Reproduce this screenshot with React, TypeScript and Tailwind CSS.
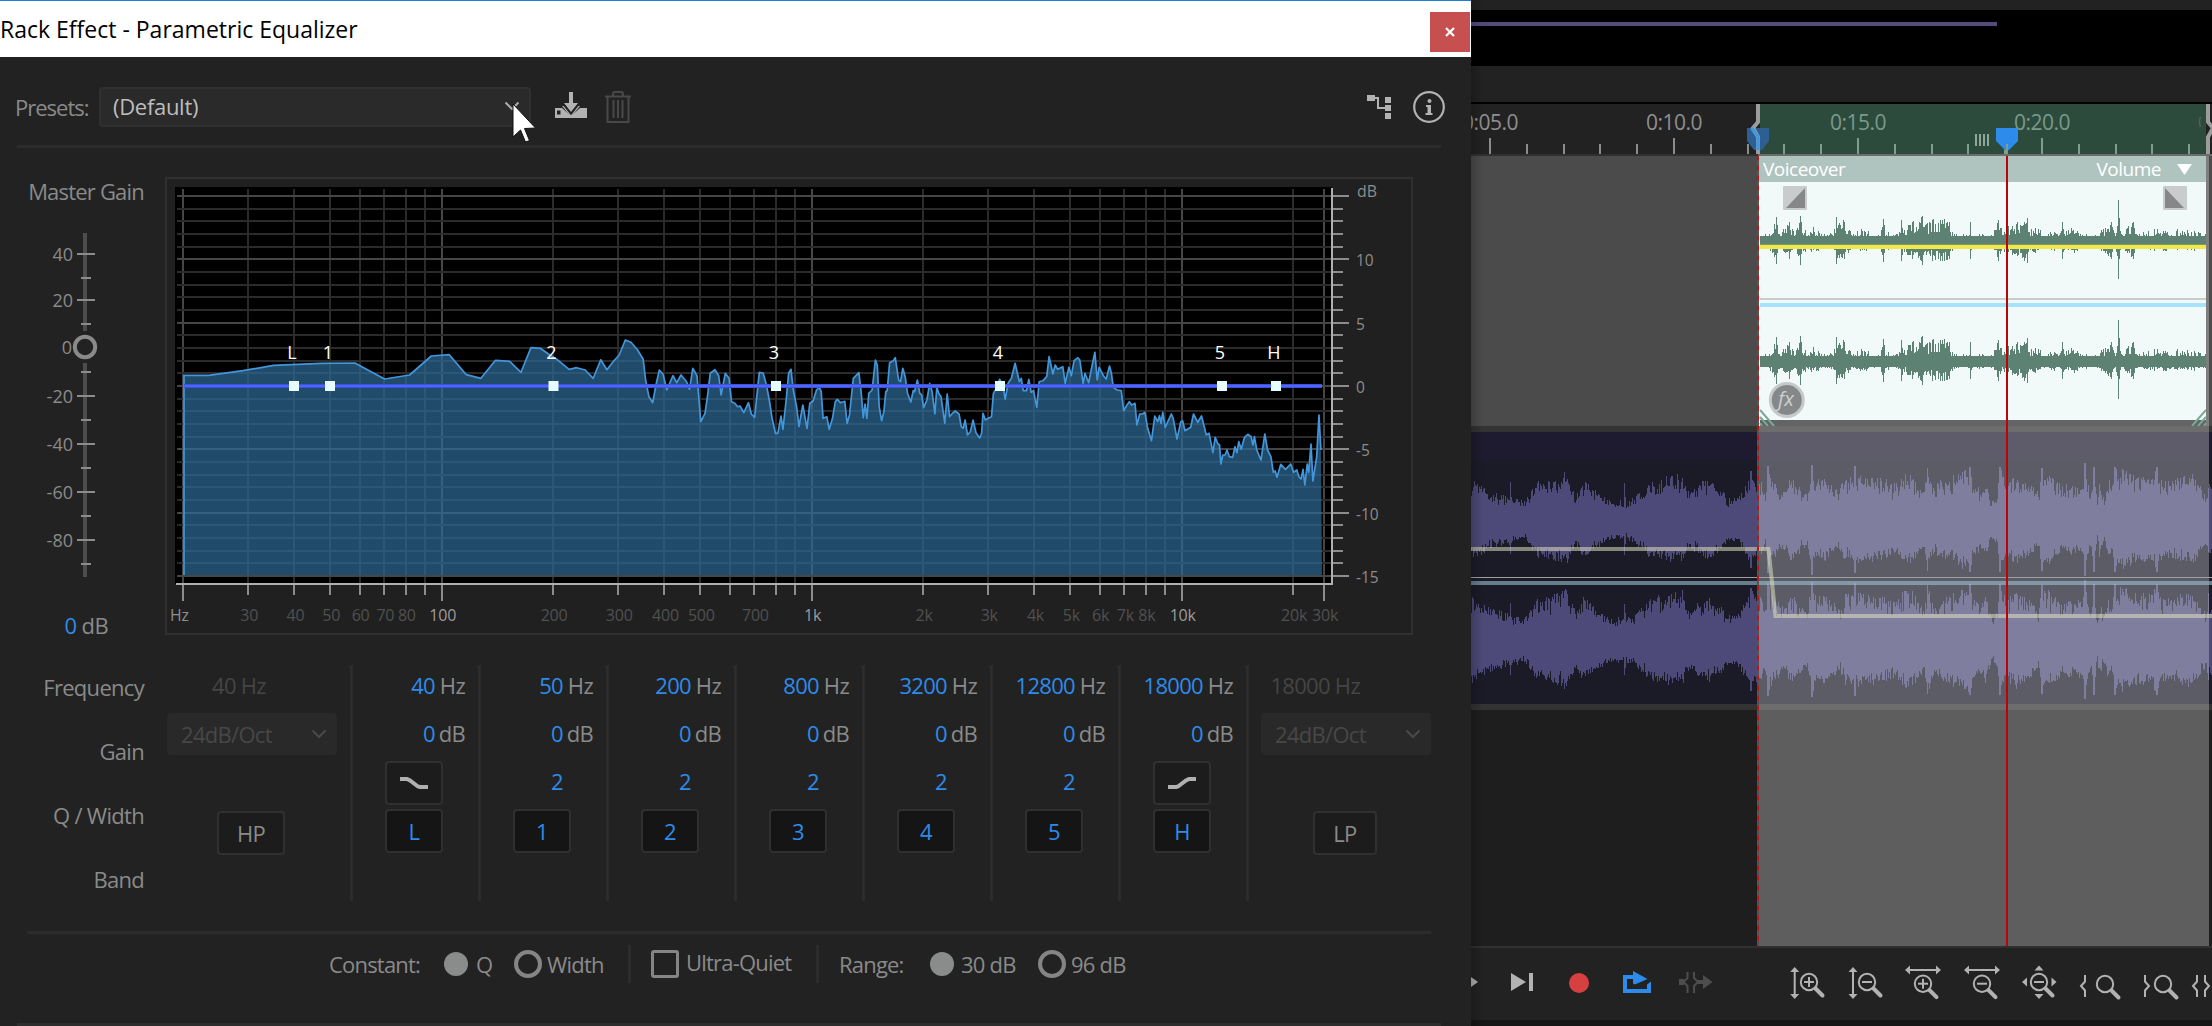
import React from "react";

type Pt = [number, number];

const FREQ_X = (f: number) => 441.7 + 370 * Math.log10(f / 100);
const DB_Y = (db: number) => 386 - db * 12.67;

const SPECTRUM_LOW =
  "390,106 442,106 515,92 580,76 680,70 752,69 815,117 868,105 914,48 952,44 988,104 1019,115 1050,61 1080,64 1104,97 1125,23 1145,25 1165,45 1180,58 1206,88 1222,83 1240,90 1257,115 1273,59 1286,89 1300,64 1312,45 1325,0 1337,7 1351,30 1363,58 1368,120 1375,170 1383,188 1390,135 1397,90 1405,102 1413,150 1426,107 1434,128 1443,105 1455,125 1461,148 1468,85 1477,107 1485,245 1494,220 1500,160 1505,100 1515,89 1523,107 1528,165 1537,100 1545,115 1550,185 1557,190 1563,200";
const SPECTRUM_HIGH =
  "0,198 8,218 18,188 24,222 31,232 41,97 49,99 56,135 62,180 68,235 75,280 80,280 87,228 91,268 98,180 103,100 108,88 113,150 120,200 125,260 133,195 142,265 148,190 155,183 162,150 168,142 172,155 176,235 184,230 189,268 196,235 202,185 206,178 213,188 222,184 227,250 232,225 240,115 252,98 257,160 261,233 265,192 269,235 273,160 280,150 287,60 291,75 295,200 300,242 305,215 309,155 312,152 317,68 325,62 329,53 336,120 340,125 345,85 350,110 355,160 362,186 367,152 370,155 376,120 381,160 385,165 389,203 396,180 402,130 407,155 413,222 417,142 421,160 426,170 434,250 439,162 444,230 450,220 456,213 464,222 469,260 473,265 477,240 482,285 488,275 494,240 500,278 508,294 512,280 515,220 520,240 526,235 533,230 537,160 545,140 550,118 557,135 562,178 568,130 575,115 583,70 592,125 596,115 600,152 607,152 612,118 617,157 622,152 629,202 634,125 642,122 650,110 655,50 663,102 668,75 673,88 684,80 689,130 697,82 702,107 708,62 716,53 720,60 727,130 731,100 739,128 747,70 752,37 757,120 761,82 770,107 776,117 783,78 787,100 791,142 799,150 808,152 813,212 820,195 825,185 830,195 837,190 841,255 847,222 853,222 858,217 864,265 872,302 879,228 885,245 889,227 892,250 896,217 901,262 914,222 918,235 926,297 934,245 938,243 943,272 955,262 961,222 970,247 978,228 988,285 994,280 1002,338 1007,292 1012,310 1016,315 1019,372 1023,345 1028,345 1032,330 1037,350 1044,352 1049,320 1053,338 1057,305 1062,328 1069,292 1076,283 1083,290 1087,315 1090,290 1095,330 1104,360 1112,282 1118,330 1125,350 1130,397 1134,393 1138,412 1146,373 1156,388 1167,372 1173,397 1180,390 1184,410 1189,417 1193,388 1197,435 1202,372 1205,398 1210,312 1214,423 1222,350 1227,225 1231,330";

const toPoints = (s: string, offset: number) =>
  s
    .split(" ")
    .map((p) => p.split(",").map(Number))
    .map(([x, y]) => `${(offset + x / 2.119).toFixed(1)},${(340 + y / 3).toFixed(1)}`)
    .join(" ");

const SPECTRUM = `${toPoints(SPECTRUM_LOW, 0)} ${toPoints(SPECTRUM_HIGH, 740)}`;

const FREQS: [number, string, boolean][] = [
  [20, "", true], [30, "30", false], [40, "40", false], [50, "50", false], [60, "60", false],
  [70, "70", false], [80, "80", false], [90, "", false], [100, "100", true], [200, "200", false],
  [300, "300", false], [400, "400", false], [500, "500", false], [600, "", false], [700, "700", false],
  [800, "", false], [900, "", false], [1000, "1k", true], [2000, "2k", false], [3000, "3k", false],
  [4000, "4k", false], [5000, "5k", false], [6000, "6k", false], [7000, "7k", false], [8000, "8k", false],
  [9000, "", false], [10000, "10k", true], [20000, "20k", false], [24270, "30k", true],
];

const HANDLES: [string, number][] = [
  ["L", 294], ["1", 330], ["2", 553.5], ["3", 776], ["4", 1000], ["5", 1222], ["H", 1276],
];

const SANS = "font-['Open_Sans','Noto_Sans',sans-serif]";

function EqGraph() {
  const dbs = Array.from({ length: 31 }, (_, i) => 15 - i);
  return (
    <svg width="1248" height="458" viewBox="165 177 1248 458" className={SANS}>
      <rect x="166" y="178" width="1246" height="456" fill="#202020" stroke="#303030" strokeWidth="2" />
      <rect x="175" y="187" width="1157" height="397" fill="#000" />
      <g shapeRendering="crispEdges">
        {FREQS.map(([f, , major]) => (
          <rect key={f} x={Math.round(FREQ_X(f)) - 1} y="189" width="2" height="395" fill={major ? "#464646" : "#2b2b2b"} />
        ))}
        {dbs.map((d) => (
          <rect key={d} x="177" y={Math.round(DB_Y(d)) - 1} width="1155" height="2" fill={d % 5 === 0 ? "#464646" : "#2b2b2b"} />
        ))}
      </g>
      <polygon points={`${SPECTRUM} 1322,575 184,575`} fill="rgb(46,107,153)" fillOpacity="0.7" />
      <polyline points={`184,575 ${SPECTRUM}`} fill="none" stroke="#4296d9" strokeWidth="1.7" strokeLinejoin="round" />
      <rect x="184" y="384" width="1138" height="4" fill="#3f4fe0" />
      <rect x="184" y="385" width="1138" height="2" fill="#4a68f4" />
      {HANDLES.map(([name, x]) => (
        <g key={name}>
          <rect x={x - 5} y="381" width="10" height="10" fill="#e6fdfd" />
          <text x={x - 2} y="359" textAnchor="middle" fontSize="18" fontWeight="500" fill="#fff">{name}</text>
        </g>
      ))}
      <g shapeRendering="crispEdges">
        <rect x="1331" y="188" width="2" height="397" fill="#b0b0b0" />
        <rect x="176" y="583" width="1157" height="2" fill="#b0b0b0" />
        {FREQS.map(([f, , major]) => (
          <rect key={f} x={Math.round(FREQ_X(f)) - 1} y="585" width="2" height={major ? 16 : 10} fill="#8c8c8c" />
        ))}
        {dbs.map((d) => (
          <rect key={d} x="1333" y={Math.round(DB_Y(d)) - 1} width={d % 5 === 0 ? 16 : 10} height="2" fill="#8c8c8c" />
        ))}
      </g>
      <g fontSize="16" textAnchor="middle">
        <text x="179.5" y="620.5" fill="#8f8f8f" textLength="19" lengthAdjust="spacingAndGlyphs">Hz</text>
        {FREQS.map(([f, label, major]) =>
          label ? (
            <text key={f} x={FREQ_X(f) + 1} y="620.5" letterSpacing="-0.2" fill={major && f < 20000 ? "#9c9c9c" : "#505050"}>{label}</text>
          ) : null
        )}
      </g>
      <g fontSize="15.5" fill="#8c8c8c">
        <text x="1357" y="196.500" textLength="20" lengthAdjust="spacingAndGlyphs">dB</text>
        {[10, 5, 0, -5, -10, -15].map((d) => (
          <text key={d} x={1356} y={DB_Y(d) + 7}>{d}</text>
        ))}
      </g>
    </svg>
  );
}

function MasterSlider() {
  const labels: [string, number][] = [["40", 254], ["20", 300], ["-20", 396], ["-40", 444], ["-60", 492], ["-80", 540]];
  return (
    <svg width="165" height="365" viewBox="0 225 165 365" className={SANS}>
      <rect x="83" y="233" width="4" height="98" fill="#4d4d4d" />
      <rect x="83" y="363" width="4" height="214" fill="#4d4d4d" />
      {labels.map(([t, y]) => (
        <g key={t}>
          <rect x="77" y={y - 1} width="18" height="2" fill="#8c8c8c" />
          <text x="73" y={y + 7} fontSize="18" textAnchor="end" fill="#8a8a8a">{t}</text>
        </g>
      ))}
      {[278, 324, 372, 420, 468, 516, 564].map((y) => (
        <rect key={y} x="81" y={y - 1} width="10" height="2" fill="#8c8c8c" />
      ))}
      <text x="72" y="354" fontSize="18" textAnchor="end" fill="#8a8a8a">0</text>
      <circle cx="85" cy="347" r="10.200" fill="#222" stroke="#8a8a8a" strokeWidth="4" />
    </svg>
  );
}

function Chevron({ className }: { className: string }) {
  return (
    <svg width="16" height="10" viewBox="0 0 16 10" className={className}>
      <path d="M1.500 1.500 8 8l6.500-6.500" fill="none" stroke="currentColor" strokeWidth="2" />
    </svg>
  );
}

function Band({ freq, band, shelf }: { freq: string; band: string; shelf?: "low" | "high" }) {
  return (
    <div className="flex h-[236px] w-[128px] flex-col border-l-[3px] border-[#2c2c2c] text-[22px] tracking-[-0.7px]">
      <div className="mt-1 flex h-8 items-center justify-end pr-[13px]">
        <span className="text-[#2d8ceb]">{freq}</span>
        <span className="w-[30px] text-right text-[#8a8a8a]">Hz</span>
      </div>
      <div className="mt-4 flex h-8 items-center justify-end pr-[13px]">
        <span className="text-[#2d8ceb]">0</span>
        <span className="w-[30px] text-right text-[#8a8a8a]">dB</span>
      </div>
      {shelf ? (
        <div className="mt-3 ml-[32px] flex h-11 w-[58px] items-center justify-center rounded border-2 border-[#303030] bg-[#1c1c1c]">
          <svg width="28" height="14" viewBox="0 0 28 14" className={shelf === "high" ? "-scale-x-100" : ""}>
            <path d="M0 3h7l3 1.500 8 6 2 .5h8" fill="none" stroke="#b0b0b0" strokeWidth="4" />
          </svg>
        </div>
      ) : (
        <div className="mt-4 mb-[-4px] flex h-11 items-start justify-end pr-[43px] text-[#2d8ceb]">2</div>
      )}
      <div className="mt-1 ml-[32px] flex h-11 w-[58px] items-center justify-center rounded border-2 border-[#303030] bg-[#151515] text-[#2d8ceb]">
        {band}
      </div>
    </div>
  );
}

function PassFilter({ freq, button, edge }: { freq: string; button: string; edge: "hp" | "lp" }) {
  return (
    <div className={edge === "hp" ? "h-[236px] w-[185px] pl-[2px] tracking-[-0.7px]" : "h-[236px] w-[187px] border-l-[3px] border-[#2c2c2c] pl-[12px] tracking-[-0.7px]"}>
      <div className="mt-1 flex h-8 w-[99px] items-center justify-end text-[22px] text-[#454545]">{freq}</div>
      <div className="mt-3 flex h-[42px] w-[170px] items-center justify-between rounded bg-[#292929] pr-[10px] pl-[14px] text-[22px] text-[#474747]">
        24dB/Oct
        <Chevron className="text-[#4a4a4a]" />
      </div>
      <div className={edge === "hp" ? "mt-14 ml-[50px] flex h-11 w-[68px] items-center justify-center rounded border-2 border-[#303030] bg-[#1c1c1c] text-[22px] text-[#8a8a8a]" : "mt-14 ml-[52px] flex h-11 w-[64px] items-center justify-center rounded border-2 border-[#303030] bg-[#1c1c1c] text-[22px] text-[#8a8a8a]"}>
        {button}
      </div>
    </div>
  );
}

const FilledRadio = () => <span className="block size-6 rounded-full bg-[#8a8c8b]" />;
const OpenRadio = () => <span className="block size-7 rounded-full border-4 border-[#858585]" />;

function EqDialog() {
  return (
    <section className="relative h-[1026px] w-[1471px] shrink-0 overflow-hidden bg-[#222]">
      <header className="flex h-[57px] items-start justify-between border-t border-[#1b80d4] bg-white">
        <h1 className="mt-[10px] text-[23px] leading-9 whitespace-nowrap text-black">Rack Effect - Parametric Equalizer</h1>
        <button className="mt-[11px] mr-px flex h-10 w-10 items-center justify-center bg-[#c64f4f]">
          <svg width="12" height="12" viewBox="0 0 12 12"><path d="M2 2l8 8M10 2l-8 8" stroke="#fff" strokeWidth="2.200" /></svg>
        </button>
      </header>
      <div className="flex h-[88px] items-start pt-[30px] pl-[15px]">
        <span className="h-10 w-[84px] text-[22px] leading-10 tracking-[-1px] text-[#8a8a8a]">Presets:</span>
        <div className="relative flex h-10 w-[432px] items-center justify-between rounded border-2 border-[#303030] bg-[#2a2a2a] pr-[9px] pb-[2px] pl-3 text-[22px] tracking-[-0.300px] text-[#bdbdbd]">
          (Default)
          <Chevron className="text-[#aaa]" />
          <svg width="28" height="42" viewBox="0 0 28 42" className="absolute top-[14px] left-[410px]">
            <path d="M2 1v33l7.500-7 5 12 4-1.500-5-12 11-.5z" fill="#fff" stroke="#111" strokeWidth="1" />
          </svg>
        </div>
        <svg width="34" height="40" viewBox="554 87 34 40" className="ml-[23px]">
          <path d="M569 92h4v11h5l-7 9-7-9h5z" fill="#b2b2b2" />
          <path d="M555 108h7l9 8 9-8h7v10h-32z" fill="#b2b2b2" />
          <path d="M562 106h3l6 8 6-8h3l-9 11z" fill="#b2b2b2" />
          <path d="M563 104l8 10 8-10" fill="none" stroke="#222" strokeWidth="1.500" />
          <rect x="557" y="110.500" width="3.500" height="4" fill="#222" />
        </svg>
        <svg width="28" height="40" viewBox="604 87 28 40" className="ml-4">
          <path d="M605 96.500h26M613 96v-2q0-2 2-2h6q2 0 2 2v2M607.500 97v25h21V97M613.500 100v18M618 100v18M622.500 100v18" fill="none" stroke="#484848" strokeWidth="2" />
        </svg>
        <svg width="84" height="40" viewBox="1364 87 84 40" className="ml-[732px]">
          <rect x="1367" y="95" width="8" height="6" fill="#b2b2b2" />
          <path d="M1374 98h4v10h8" fill="none" stroke="#b2b2b2" strokeWidth="2" />
          <rect x="1385" y="97" width="6" height="6" fill="#b2b2b2" />
          <rect x="1385" y="105" width="6" height="6" fill="#b2b2b2" />
          <rect x="1385" y="113" width="6" height="6" fill="#b2b2b2" />
          <circle cx="1429" cy="107" r="14.800" fill="none" stroke="#b2b2b2" strokeWidth="2.200" />
          <circle cx="1429.500" cy="101" r="2" fill="#b2b2b2" />
          <path d="M1426 105h5v8h1.500v2h-7v-2h2v-6h-1.500z" fill="#b2b2b2" />
        </svg>
      </div>
      <div className="ml-[17px] h-[3px] w-[1424px] bg-[#2c2c2c]" />
      <div className="mt-[29px] flex h-[458px]">
        <div className="w-[165px]">
          <div className="h-[48px] pr-[21px] text-right text-[22px] leading-7 tracking-[-0.8px] text-[#8a8a8a]">Master Gain</div>
          <MasterSlider />
          <div className="mt-[19px] pr-[57px] text-right text-[22px] leading-8 tracking-[-0.6px] text-[#8a8a8a]"><span className="text-[#2d8ceb]">0</span> dB</div>
        </div>
        <EqGraph />
      </div>
      <div className="mt-[30px] flex">
        <div className="flex w-[165px] flex-col gap-8 pt-[6px] pr-[21px] text-right text-[22px] leading-8 tracking-[-0.700px] text-[#8a8a8a]">
          <div>Frequency</div>
          <div>Gain</div>
          <div>Q / Width</div>
          <div>Band</div>
        </div>
        <PassFilter freq="40 Hz" button="HP" edge="hp" />
        <Band freq="40" band="L" shelf="low" />
        <Band freq="50" band="1" />
        <Band freq="200" band="2" />
        <Band freq="800" band="3" />
        <Band freq="3200" band="4" />
        <Band freq="12800" band="5" />
        <Band freq="18000" band="H" shelf="high" />
        <PassFilter freq="18000 Hz" button="LP" edge="lp" />
      </div>
      <div className="mt-[30px] ml-[27px] h-[3px] w-[1404px] bg-[#2c2c2c]" />
      <div className="flex h-[60px] items-center pl-[329px] text-[22px] tracking-[-0.8px] whitespace-nowrap text-[#8a8a8a]">
        <span className="w-[115px]">Constant:</span>
        <FilledRadio />
        <span className="ml-2 w-[38px]">Q</span>
        <OpenRadio />
        <span className="ml-[5px] w-[81px]">Width</span>
        <span className="h-[38px] w-[3px] bg-[#2c2c2c]" />
        <span className="ml-5 block size-7 rounded-[3px] border-[3px] border-[#858585]" />
        <span className="ml-[7px] w-[130px] pb-1">Ultra-Quiet</span>
        <span className="h-[38px] w-[3px] bg-[#2c2c2c]" />
        <span className="ml-5 w-[91px]">Range:</span>
        <FilledRadio />
        <span className="ml-[7px] w-[77px]">30 dB</span>
        <OpenRadio />
        <span className="ml-[5px]">96 dB</span>
      </div>
      <div className="mt-[29px] ml-[17px] h-[3px] w-[1424px] bg-[#2e2e2e]" />
    </section>
  );
}

const VOICE_ENV: Pt[] = [
  [8, 6], [15, 8], [20, 16], [24, 25], [28, 12], [37, 20], [43, 10], [48, 26], [52, 11], [60, 15], [70, 10], [80, 8],
  [84, 25], [92, 20], [100, 9], [112, 15], [120, 8], [128, 9], [131, 23], [133, 9], [148, 10], [149, 22], [151, 12], [160, 20], [170, 26],
  [173, 16], [180, 22], [190, 22], [197, 20], [200, 11], [205, 8], [217, 8], [218, 20], [220, 9], [240, 7], [246, 22], [250, 14], [262, 18],
  [275, 24], [278, 13], [285, 14], [294, 9], [298, 13], [308, 9], [310, 20], [313, 10], [323, 18], [328, 8], [343, 7], [359, 20], [363, 7],
  [366, 42], [369, 8], [381, 20], [385, 9], [400, 12], [420, 12], [440, 11], [455, 7],
];

const BED_ENV: Pt[] = (
  [
    [0, 430], [40, 460], [78, 480], [80, 430], [83, 480], [110, 490], [140, 432], [165, 430], [200, 405], [220, 475], [235, 430],
    [260, 460], [290, 490], [320, 490], [322, 430], [325, 490], [345, 480], [370, 440], [400, 422], [445, 412], [460, 470], [490, 430],
    [515, 440], [540, 478], [560, 485], [580, 440], [590, 400], [600, 430],
  ] as Pt[]
)
  .map(([x, y]): Pt => [1 + x / 2.119, 181 - y / 3])
  .concat(
    (
      [
        [20, 180], [40, 230], [46, 145], [60, 190], [100, 225], [115, 180], [150, 215], [165, 235], [178, 140], [190, 190], [220, 178],
        [260, 225], [275, 180], [300, 178], [307, 145], [312, 180], [340, 175], [400, 188], [420, 205], [455, 170], [480, 175], [515, 225],
        [525, 150], [540, 195], [580, 185], [620, 168], [652, 148], [660, 190], [680, 215], [700, 190], [718, 250], [735, 232], [742, 148],
        [760, 190], [790, 168], [830, 200], [860, 228], [868, 150], [900, 185], [930, 205], [970, 200], [992, 200], [998, 135], [1003, 180],
        [1015, 230], [1025, 148], [1035, 255], [1040, 195], [1055, 248], [1070, 185], [1078, 225], [1087, 148], [1130, 170], [1200, 175],
        [1213, 148], [1220, 185], [1250, 195], [1320, 170], [1360, 230], [1368, 180], [1380, 200],
      ] as Pt[]
    ).map(([x, y]): Pt => [281 + x / 3, 101 - y / 3])
  );

function envelopeAt(env: Pt[], x: number) {
  for (let i = 1; i < env.length; i++) {
    if (x <= env[i][0]) {
      const [x0, y0] = env[i - 1];
      const [x1, y1] = env[i];
      return y0 + ((y1 - y0) * (x - x0)) / Math.max(x1 - x0, 0.01);
    }
  }
  return env[env.length - 1][1];
}

type WaveShape = { mid: number; seed: number; low: number; skew: number; floor: number; gain: number; boost: number; pin: number };

/* One-pixel columns whose height follows the envelope; columns at peaks of at least `pin` keep their full height. */
function wavePath(env: Pt[], from: number, to: number, w: WaveShape) {
  let s = w.seed;
  const rnd = () => {
    s = (s * 16807) % 2147483647;
    return s / 2147483647;
  };
  const jitter = () => w.low + (1.05 - w.low) * Math.pow(rnd(), w.skew);
  let d = "";
  for (let x = from; x < to; x++) {
    const peak = env.find(([kx, ky]) => Math.abs(kx - x) < 1 && ky >= w.pin);
    const e = (peak ? peak[1] : envelopeAt(env, x)) + w.boost;
    const up = jitter();
    const down = jitter() * 0.6 + up * 0.4;
    const a = Math.max(w.floor, e * (peak ? 1 : up));
    const b = Math.max(w.floor, e * w.gain * (peak ? 1 : down));
    d += `M${x} ${(w.mid - a).toFixed(1)}h1V${(w.mid + b).toFixed(1)}h-1z`;
  }
  return d;
}

const VOICE: WaveShape = { mid: 85.7, seed: 4211, low: 0.4, skew: 1.4, floor: 5.7, gain: 0.88, boost: 0, pin: 20 };
const BED: WaveShape = { mid: 89, seed: 977, low: 0.6, skew: 0.7, floor: 4, gain: 0.95, boost: 2, pin: 47 };
const VOICE_TOP = wavePath(VOICE_ENV, 8, 454, VOICE);
const VOICE_BOTTOM = wavePath(VOICE_ENV, 8, 454, { ...VOICE, mid: 205.7 });
const BED_TOP = wavePath(BED_ENV, 0, 741, BED);
const BED_BOTTOM = wavePath(BED_ENV, 0, 741, { ...BED, mid: 209, seed: 5381, boost: 5 });

function Ruler() {
  const ticks = Array.from({ length: 21 }, (_, i) => ({ x: Math.round(1489.900 + i * 36.800), major: i % 5 === 0 }));
  const inside = (x: number) => x > 1760 && x < 2206;
  return (
    <svg width="741" height="52" viewBox="1471 104 741 52" className={`block ${SANS}`}>
      <rect x="1471" y="104" width="741" height="52" fill="#222" />
      <rect x="1760" y="104" width="446" height="50" fill="#2c4b3d" />
      <rect x="1471" y="154" width="287" height="2" fill="#303030" />
      <rect x="1758" y="154" width="454" height="2" fill="#6c6c6c" />
      {ticks.map(({ x, major }) => (
        <rect key={x} x={x - 1} y={major ? 138 : 144} width="2" height={major ? 16 : 10} fill={inside(x) ? "#7d9f90" : "#8c8c8c"} />
      ))}
      <g fontSize="21" letterSpacing="-0.500">
        <text x="1462" y="130" fill="#8f8f8f">0:05.0</text>
        <text x="1646" y="130" fill="#8f8f8f">0:10.0</text>
        <text x="1830" y="130" fill="#7a9a8b">0:15.0</text>
        <text x="2014" y="130" fill="#7a9a8b">0:20.0</text>
      </g>
      <path d="M2200.500 117q-2 5 0 10" fill="none" stroke="#54605a" strokeWidth="1.500" />
      <path d="M1747 128h22v13l-7 9h-8l-7-9z" fill="#2e5f92" />
      <path d="M1758 104v18l-5 6 5 9v17" fill="none" stroke="#9a9d9b" strokeWidth="4" />
      <path d="M1751.500 128l6.500 9v13" fill="none" stroke="#4596dc" strokeWidth="3.500" />
      <path d="M2208 104v18l5 6-5 9v17" fill="none" stroke="#9a9d9b" strokeWidth="4" />
      <g fill="#8fa69b">
        <rect x="1975" y="134" width="2" height="12" />
        <rect x="1979" y="134" width="2" height="12" />
        <rect x="1983" y="134" width="2" height="12" />
        <rect x="1987" y="134" width="2" height="12" />
      </g>
      <path d="M1996 128h22v13l-9 9h-4l-9-9z" fill="#2d8ceb" />
      <rect x="2006" y="144" width="2" height="10" fill="#7d9f90" />
    </svg>
  );
}

function VoiceClip() {
  return (
    <div className="absolute top-0 left-[287px] z-10 h-[270px] w-[448px] bg-[#f2faf9]">
      <div className="flex h-[26px] items-center bg-[#b0c4bf] pr-[14px] pl-[5px] text-[19px] leading-[26px] tracking-[-0.5px] text-white">
        <span className="grow">Voiceover</span>
        <span className="mr-[16px]">Volume</span>
        <svg width="15" height="11" viewBox="0 0 15 11"><path d="M0 0h15L7.500 11z" fill="#fff" /></svg>
      </div>
      <svg width="448" height="244" viewBox="6 26 448 244" className="block">
        <path d={VOICE_TOP} fill="#5d8274" shapeRendering="crispEdges" />
        <path d={VOICE_BOTTOM} fill="#5d8274" shapeRendering="crispEdges" />
        <rect x="8" y="88" width="446" height="1" fill="#87975a" />
        <rect x="8" y="89" width="446" height="4" fill="#eeea4e" />
        <rect x="8" y="142.500" width="446" height="1" fill="#9a9fa0" />
        <rect x="8" y="147" width="446" height="4" fill="#a6e2fc" />
        <rect x="31" y="30" width="24" height="24" rx="1" fill="#c9cccc" />
        <path d="M34 52h19V32z" fill="#858788" />
        <rect x="411" y="30" width="24" height="24" rx="1" fill="#c9cccc" />
        <path d="M413 32v20h19z" fill="#858788" />
        <circle cx="34.800" cy="244" r="16.500" fill="#858888" stroke="#c5c9c8" strokeWidth="3" />
        <text x="34" y="250" textAnchor="middle" fontSize="20" fontStyle="italic" fill="#cdd0cf" className={SANS}>fx</text>
        <rect x="8" y="264" width="446" height="6" fill="#636466" />
        <path d="M8 254l14 16M8 261l8 9M8 267l2 3M454 254l-14 16M454 261l-8 9M454 267l-2 3" fill="none" stroke="#79a995" strokeWidth="2" />
      </svg>
    </div>
  );
}

function BedTrack() {
  return (
    <svg width="741" height="272" viewBox="0 0 741 272" className="block">
      <rect width="741" height="272" fill="#1a1b27" />
      <rect width="741" height="28" fill="#1e1b30" />
      <path d={BED_TOP} fill="#4d4a79" shapeRendering="crispEdges" />
      <path d={BED_BOTTOM} fill="#4d4a79" shapeRendering="crispEdges" />
    </svg>
  );
}

function Magnifier({ x, y, sign }: { x: number; y: number; sign?: "plus" | "minus" }) {
  return (
    <g fill="none" stroke="#b2b2b2">
      <circle cx={x} cy={y} r="8.200" strokeWidth="2" />
      <path d={`M${x + 6.500} ${y + 6.500}l7 7`} strokeWidth="4" strokeLinecap="round" />
      {sign && <path d={`M${x - 5} ${y}h10`} strokeWidth="2" />}
      {sign === "plus" && <path d={`M${x} ${y - 5}v10`} strokeWidth="2" />}
    </g>
  );
}

function Slot({ x, w, children }: { x: number; w: number; children?: React.ReactNode }) {
  return (
    <svg width={w} height="72" viewBox={`${x} 948 ${w} 72`} className="shrink-0">
      {children}
    </svg>
  );
}

const vArrow = (x: number) => `M${x - 4.500} 972l4.500-5 4.500 5h-3.500v22h3.500l-4.500 5-4.500-5h3.500v-22z`;
const hArrow = (x: number) => `M${x} 970l5-4.500v3.500h26v-3.500l5 4.500-5 4.500v-3.500h-26v3.500z`;

function Transport() {
  return (
    <div className="flex h-[72px] w-[741px] overflow-hidden bg-[#222]">
      <Slot x={1471} w={26}><path d="M1471 977l7 5-7 5z" fill="#b2b2b2" /></Slot>
      <Slot x={1497} w={53}><path d="M1511 973l15 9-15 9zM1529 973h4v18h-4z" fill="#b2b2b2" /></Slot>
      <Slot x={1550} w={55}><circle cx="1579" cy="983" r="10" fill="#d64040" /></Slot>
      <Slot x={1605} w={60}>
        <path d="M1623 975h10v-4l14.500 8-12.500 5.500-2-1v-4.500h-6v10h20v-4.500l4-3v11.500h-28z" fill="#2d8ceb" />
      </Slot>
      <Slot x={1665} w={105}>
        <path d="M1687.500 972v6l-4 4 4 4v7M1694 972v6l4 4-4 4v7" fill="none" stroke="#4d4d4d" strokeWidth="2" />
        <path d="M1679 979h5v6h-5zM1697 980h6v-5l9.500 7-9.500 7v-5h-6z" fill="#4d4d4d" />
      </Slot>
      <Slot x={1770} w={66}><path d={vArrow(1794.700)} fill="#b2b2b2" /><Magnifier x={1809} y={982} sign="plus" /></Slot>
      <Slot x={1836} w={60}><path d={vArrow(1853)} fill="#b2b2b2" /><Magnifier x={1867} y={982} sign="minus" /></Slot>
      <Slot x={1896} w={58}><path d={hArrow(1905)} fill="#b2b2b2" /><Magnifier x={1923} y={983.700} sign="plus" /></Slot>
      <Slot x={1954} w={58}><path d={hArrow(1964)} fill="#b2b2b2" /><Magnifier x={1982} y={983.700} sign="minus" /></Slot>
      <Slot x={2012} w={58}>
        <Magnifier x={2039} y={982} sign="minus" />
        <path d="M2034.500 970.500l4.500-5 4.500 5zM2034.500 994l4.500 5 4.500-5zM2027 977.500l-5 4.500 5 4.500zM2051.500 977.500l5 4.500-5 4.500z" fill="#b2b2b2" />
      </Slot>
      <Slot x={2070} w={60}>
        <path d="M2085 975v6.500l-4 4.500 4 4.500v6.500" fill="none" stroke="#b2b2b2" strokeWidth="2" />
        <Magnifier x={2105} y={984} />
      </Slot>
      <Slot x={2130} w={56}>
        <path d="M2145 975v6.500l4 4.500-4 4.500v6.500" fill="none" stroke="#b2b2b2" strokeWidth="2" />
        <Magnifier x={2163} y={984} />
      </Slot>
      <Slot x={2186} w={26}>
        <path d="M2197 975v6.500l-4 4.500 4 4.500v6.500M2205 975v6.500l4 4.500-4 4.500v6.500" fill="none" stroke="#b2b2b2" strokeWidth="2" />
      </Slot>
    </div>
  );
}

function Editor() {
  return (
    <section className="relative flex h-[1026px] w-[741px] flex-col overflow-hidden bg-[#222]">
      <div className="mt-[10px] h-14 bg-black pt-3"><div className="h-1 w-[526px] bg-[#524c7c]" /></div>
      <div className="h-9" />
      <div className="h-[2px] bg-black" />
      <Ruler />
      <div className="relative h-[790px] bg-[#1e1e1e]">
        <div className="h-[270px] bg-[#4b4b4b]" />
        <div className="h-[6px] bg-[#333]" />
        <BedTrack />
        <div className="h-[6px] bg-[#333]" />
        <div className="absolute inset-y-0 left-[287px] w-[451px] bg-white/[0.285]" />
        <svg width="741" height="272" viewBox="0 0 741 272" className="absolute top-[276px] left-0">
          <rect y="145" width="741" height="1" fill="#a0a0a0" />
          <rect y="149" width="741" height="4" fill="#9fc4d6" fillOpacity="0.580" />
          <path d="M0 117h297.500l7 67H741" fill="none" stroke="#dfe0c0" strokeOpacity="0.550" strokeWidth="4" />
        </svg>
        <VoiceClip />
        <div className="absolute inset-y-0 left-[286px] z-20 w-[2px] bg-[repeating-linear-gradient(180deg,#c01414_0px,#c01414_4px,#555_5px,#555_9px,#c01414_10px)]" />
        <div className="absolute inset-y-0 left-[535px] z-20 w-[2px] bg-[#bb0404]" />
      </div>
      <div className="h-[2px] bg-[#303030]" />
      <Transport />
      <div className="h-[6px] bg-[#161616]" />
      <div className="absolute inset-y-0 left-0 z-30 w-3 bg-linear-to-r from-black/20 to-transparent" />
    </section>
  );
}

export default function App() {
  return (
    <main className="flex h-[1026px] w-[2212px] overflow-hidden bg-[#222] font-['Open_Sans','Noto_Sans',sans-serif]">
      <EqDialog />
      <Editor />
    </main>
  );
}
